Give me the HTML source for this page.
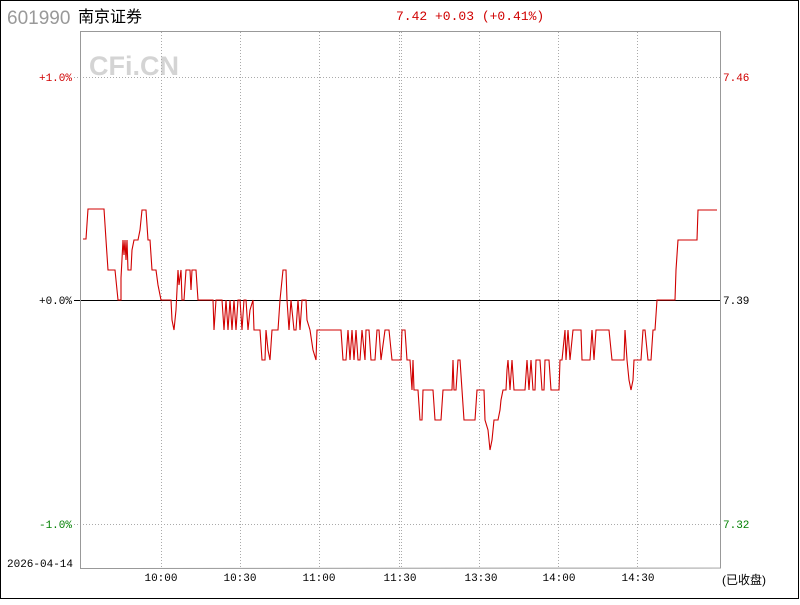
<!DOCTYPE html>
<html><head><meta charset="utf-8"><style>
html,body{margin:0;padding:0;background:#fff;}
body{width:800px;height:600px;overflow:hidden;}
.m{font-family:"Liberation Mono","Noto Sans CJK SC",monospace;}
</style></head><body>
<svg width="800" height="600" xmlns="http://www.w3.org/2000/svg">
<rect x="0.5" y="0.5" width="798" height="598" fill="#fff" stroke="#000"/>
<text x="7" y="24" style="font-family:'Liberation Sans',sans-serif;font-size:19px" fill="#999">601990</text>
<text x="78" y="22" style="font-family:'Liberation Sans','Noto Sans CJK SC',sans-serif;font-size:16px" fill="#000">南京证券</text>
<text class="m" x="396" y="20" font-size="13" fill="#d00000">7.42 +0.03 (+0.41%)</text>
<text x="89" y="75" style="font-family:'Liberation Sans',sans-serif;font-weight:bold;font-size:27px" fill="#d4d4d4">CFi.CN</text>
<g stroke="#aaa" stroke-dasharray="1,2" stroke-width="1">
<line x1="161.5" y1="32" x2="161.5" y2="568"/>
<line x1="240.5" y1="32" x2="240.5" y2="568"/>
<line x1="319.5" y1="32" x2="319.5" y2="568"/>
<line x1="399.5" y1="32" x2="399.5" y2="568"/>
<line x1="401.5" y1="32" x2="401.5" y2="568"/>
<line x1="479.5" y1="32" x2="479.5" y2="568"/>
<line x1="558.5" y1="32" x2="558.5" y2="568"/>
<line x1="637.5" y1="32" x2="637.5" y2="568"/>
<line x1="74" y1="77.5" x2="720" y2="77.5"/>
<line x1="74" y1="524.5" x2="720" y2="524.5"/>
</g>
<line x1="74" y1="300.5" x2="720" y2="300.5" stroke="#000"/>
<polyline points="80.5,568 80.5,31.5 720.5,31.5 720.5,568 80,568.5" fill="none" stroke="#999"/>
<g class="m" font-size="11">
<text x="72" y="81" fill="#d00000" text-anchor="end">+1.0%</text>
<text x="72" y="304" fill="#000" text-anchor="end">+0.0%</text>
<text x="72" y="528" fill="#008000" text-anchor="end">-1.0%</text>
<text x="723" y="81" fill="#d00000">7.46</text>
<text x="723" y="304" fill="#000">7.39</text>
<text x="723" y="528" fill="#008000">7.32</text>
<text x="7" y="567" fill="#000">2026-04-14</text>
<g fill="#000" text-anchor="middle">
<text x="161" y="581">10:00</text><text x="240" y="581">10:30</text><text x="319" y="581">11:00</text><text x="400" y="581">11:30</text><text x="481" y="581">13:30</text><text x="559" y="581">14:00</text><text x="638" y="581">14:30</text>
</g>
</g>
<text x="722" y="584" style="font-family:'Liberation Sans','Noto Sans CJK SC',sans-serif;font-size:12px" fill="#000">(已收盘)</text>
<polyline fill="none" stroke="#d00000" stroke-width="1.1" stroke-linejoin="miter" points="
83,239 86,239 88,209 104,209 106,240 108,270 115,270 117,290 118,300 121,300 121,278 123,240 124,255 125,240 126,260 127,240 128,270 131,270 132,250 134,240 138,240 140,230 142,210 146,210 148,240 150,240 152,270 156,270 158,285 161,300 171,300 172,320 174,330 176,310 177,290 178,270 179,285 181,270 182,300 184,300 186,270 190,270 191,290 192,270 196,270 198,300 213,300 214,330 216,300 222,300 224,330 226,300 228,330 230,300 232,330 234,300 236,330 238,300 240,300 242,330 244,300 246,300 248,330 250,310 253,300 254,330 260,330 262,360 265,360 266,330 268,350 270,360 272,330 278,330 280,300 282,280 283,270 286,270 287,300 289,330 291,300 292,310 294,330 296,330 298,300 300,330 302,300 306,300 307,320 310,330 313,350 316,360 317,330 341,330 343,360 346,360 348,330 350,360 352,330 354,360 356,330 358,360 360,360 362,330 365,360 366,330 369,330 371,360 375,360 377,330 379,330 381,360 385,330 389,330 392,360 401,360 402,330 405,330 407,360 410,360 412,390 413,360 414,390 418,390 420,420 422,420 423,390 433,390 435,420 441,420 443,390 452,390 453,360 454,390 456,390 458,360 460,360 462,390 464,420 475,420 477,390 484,390 485,420 488,430 490,450 492,440 494,420 496,420 498,420 500,410 501,400 503,390 506,390 507,370 508,360 510,390 512,360 514,390 525,390 527,360 529,390 531,360 533,390 535,390 536,360 540,360 542,390 544,390 545,360 549,360 551,390 559,390 560,360 562,360 564,340 565,330 566,360 568,330 570,360 573,330 576,330 581,330 582,360 590,360 592,330 594,360 596,330 609,330 612,360 624,360 625,330 627,360 629,380 631,390 633,380 634,360 641,360 643,330 645,330 648,360 651,360 653,330 655,330 657,300 675,300 676,270 678,240 697,240 698,210 717,210"/>
</svg>
</body></html>
